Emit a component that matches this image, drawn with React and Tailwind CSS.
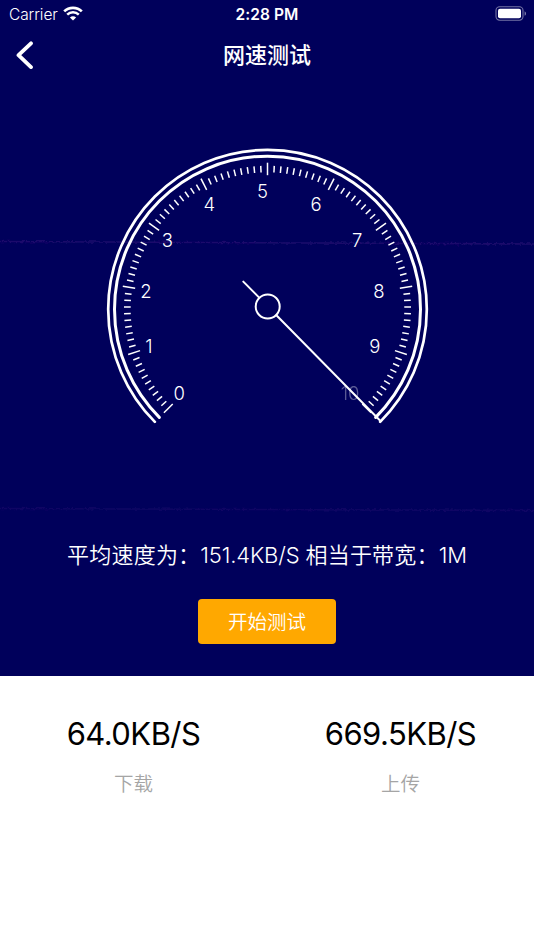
import { useId } from "react";

const CX = 267.5;
const CY = 309.2;
const START = 135;
const STEP = 2.7;

const labels = [
    { text: "0", x: 179.3, y: 399.5 },
    { text: "1", x: 148.8, y: 352.5 },
    { text: "2", x: 146, y: 297.5 },
    { text: "3", x: 167.3, y: 246.5 },
    { text: "4", x: 209.2, y: 210.5 },
    { text: "5", x: 262.6, y: 198 },
    { text: "6", x: 316, y: 210.5 },
    { text: "7", x: 357.2, y: 246.5 },
    { text: "8", x: 379, y: 297.5 },
    { text: "9", x: 374.8, y: 352.5 },
    { text: "10", x: 350, y: 399.5, dim: true },
];

const stats = [
    { value: "64.0KB/S", label: "下载" },
    { value: "669.5KB/S", label: "上传" },
];

function polar(radius, degrees) {
    const a = (degrees * Math.PI) / 180;
    return [CX + radius * Math.cos(a), CY + radius * Math.sin(a)];
}

function arc(radius) {
    const [x1, y1] = polar(radius, START);
    const [x2, y2] = polar(radius, START + 270);
    return `M${x1} ${y1}A${radius} ${radius} 0 1 1 ${x2} ${y2}`;
}

function StatusBar() {
    return (
        <div className="grid h-7 grid-cols-3 items-center pl-[9px] pr-[7px] text-[15.5px] leading-7">
            <div className="flex items-center gap-[5px]">
                <span className="font-[350] tracking-[-0.1px]">Carrier</span>
                <svg className="mb-0.5" width="20" height="15" viewBox="0 0 20 15" fill="none" stroke="currentColor">
                    <path d="M1.2 5.4C6 .7 14 .7 18.8 5.4" strokeWidth="2.7" />
                    <path d="M4.2 8.6C7.4 5.5 12.6 5.5 15.8 8.6" strokeWidth="2.5" />
                    <path d="M10 14.6L6.9 11.5C8.7 9.9 11.3 9.9 13.1 11.5Z" fill="currentColor" stroke="none" />
                </svg>
            </div>
            <span className="pt-px pr-0.5 text-center font-semibold tracking-[0.1px]">2:28 PM</span>
            <svg className="mb-0.5 justify-self-end" width="32" height="15" viewBox="0 0 32 15" fill="none">
                <rect x="1" y=".8" width="27" height="13.4" rx="3.6" stroke="white" strokeOpacity=".45" strokeWidth="1.1" />
                <rect x="3" y="2.8" width="23" height="9.4" rx="2" fill="white" />
                <path d="M29.6 5.2C31.5 6 31.5 9 29.6 9.8Z" fill="white" fillOpacity=".5" />
            </svg>
        </div>
    );
}

function Header() {
    return (
        <header className="grid h-[54px] grid-cols-[60px_1fr_60px] items-center">
            <button className="pl-4" aria-label="返回">
                <svg width="18" height="28" viewBox="0 0 18 28" fill="none" stroke="currentColor" strokeWidth="3.8" strokeLinecap="round" strokeLinejoin="round">
                    <path d="M15 2.3L2.5 14.2L15 26.1" />
                </svg>
            </button>
            <h1 className="text-center text-[22px] font-medium leading-[30px]">网速测试</h1>
        </header>
    );
}

function Gauge() {
    const rough = useId();

    return (
        <svg className="block" width="534" height="450" viewBox="0 82 534 450" fill="none" stroke="white">
            <filter id={rough} x="0" y="-10" width="534" height="20" filterUnits="userSpaceOnUse">
                <feTurbulence type="fractalNoise" baseFrequency=".3" numOctaves="2" />
                <feDisplacementMap in="SourceGraphic" scale="4" />
            </filter>

            {/* Faint scan lines behind the dial */}
            <g stroke="#220e70" strokeWidth="1.6">
                <g transform="translate(0 242.5)" opacity=".8">
                    <path d="M0 -1L534 1.5" filter={`url(#${rough})`} />
                </g>
                <g transform="translate(0 509.5)" opacity=".45">
                    <path d="M0 -1L534 1" filter={`url(#${rough})`} />
                </g>
            </g>

            <path d={arc(159.3)} strokeWidth="2.7" strokeLinecap="round" />
            <path d={arc(153)} strokeWidth="3" strokeLinecap="round" />

            {Array.from({ length: 101 }, (_, i) => {
                const major = i % 10 === 0;
                const [x1, y1] = polar(major ? 146.5 : 143.5, START + i * STEP);
                const [x2, y2] = polar(major ? 134 : 136.8, START + i * STEP);
                return <line key={i} x1={x1} y1={y1} x2={x2} y2={y2} strokeWidth="1.5" />;
            })}

            <g className="font-[350]" fill="white" stroke="none" fontSize="18.5" textAnchor="middle">
                {labels.map((l) => (
                    <text key={l.text} x={l.x} y={l.y} opacity={l.dim ? 0.35 : 1}>
                        {l.text}
                    </text>
                ))}
            </g>

            {/* Needle */}
            <path d="M243.3 281.6L259.2 297.6M276.4 315.2L380 420.5" strokeWidth="2" strokeLinecap="round" />
            <circle cx="267.7" cy="306.5" r="12" strokeWidth="2" />
        </svg>
    );
}

function App() {
    return (
        <div className="flex h-[950px] w-[534px] flex-col overflow-hidden bg-white font-[Inter,'Noto_Sans_CJK_SC',sans-serif]">
            <section className="h-[676px] bg-[#00005b] text-white">
                <StatusBar />
                <Header />
                <Gauge />
                <p className="mt-[7px] flex justify-center whitespace-pre text-[22px] font-[350] leading-8">
                    <span className="tracking-[0.2px]">平均速度为：</span>
                    <span className="tracking-[-0.15px]">151.4KB/S </span>
                    <span className="tracking-[0.2px]">相当于带宽：</span>
                    <span className="tracking-[-0.15px]">1M</span>
                </p>
                <button className="mx-auto mt-7 block h-[45px] w-[138px] rounded-[4px] bg-[#ffa800] pt-px text-[19.5px] font-[350] leading-[45px]">
                    开始测试
                </button>
            </section>

            <section className="grid grid-cols-2 pt-[38px] text-center">
                {stats.map((s) => (
                    <div key={s.label}>
                        <div className="text-[31px] leading-10 tracking-[-0.55px] text-black">{s.value}</div>
                        <div className="mt-4 text-[19.5px] font-[350] leading-7 text-[#a5a5a5]">{s.label}</div>
                    </div>
                ))}
            </section>
        </div>
    );
}

export default App;
